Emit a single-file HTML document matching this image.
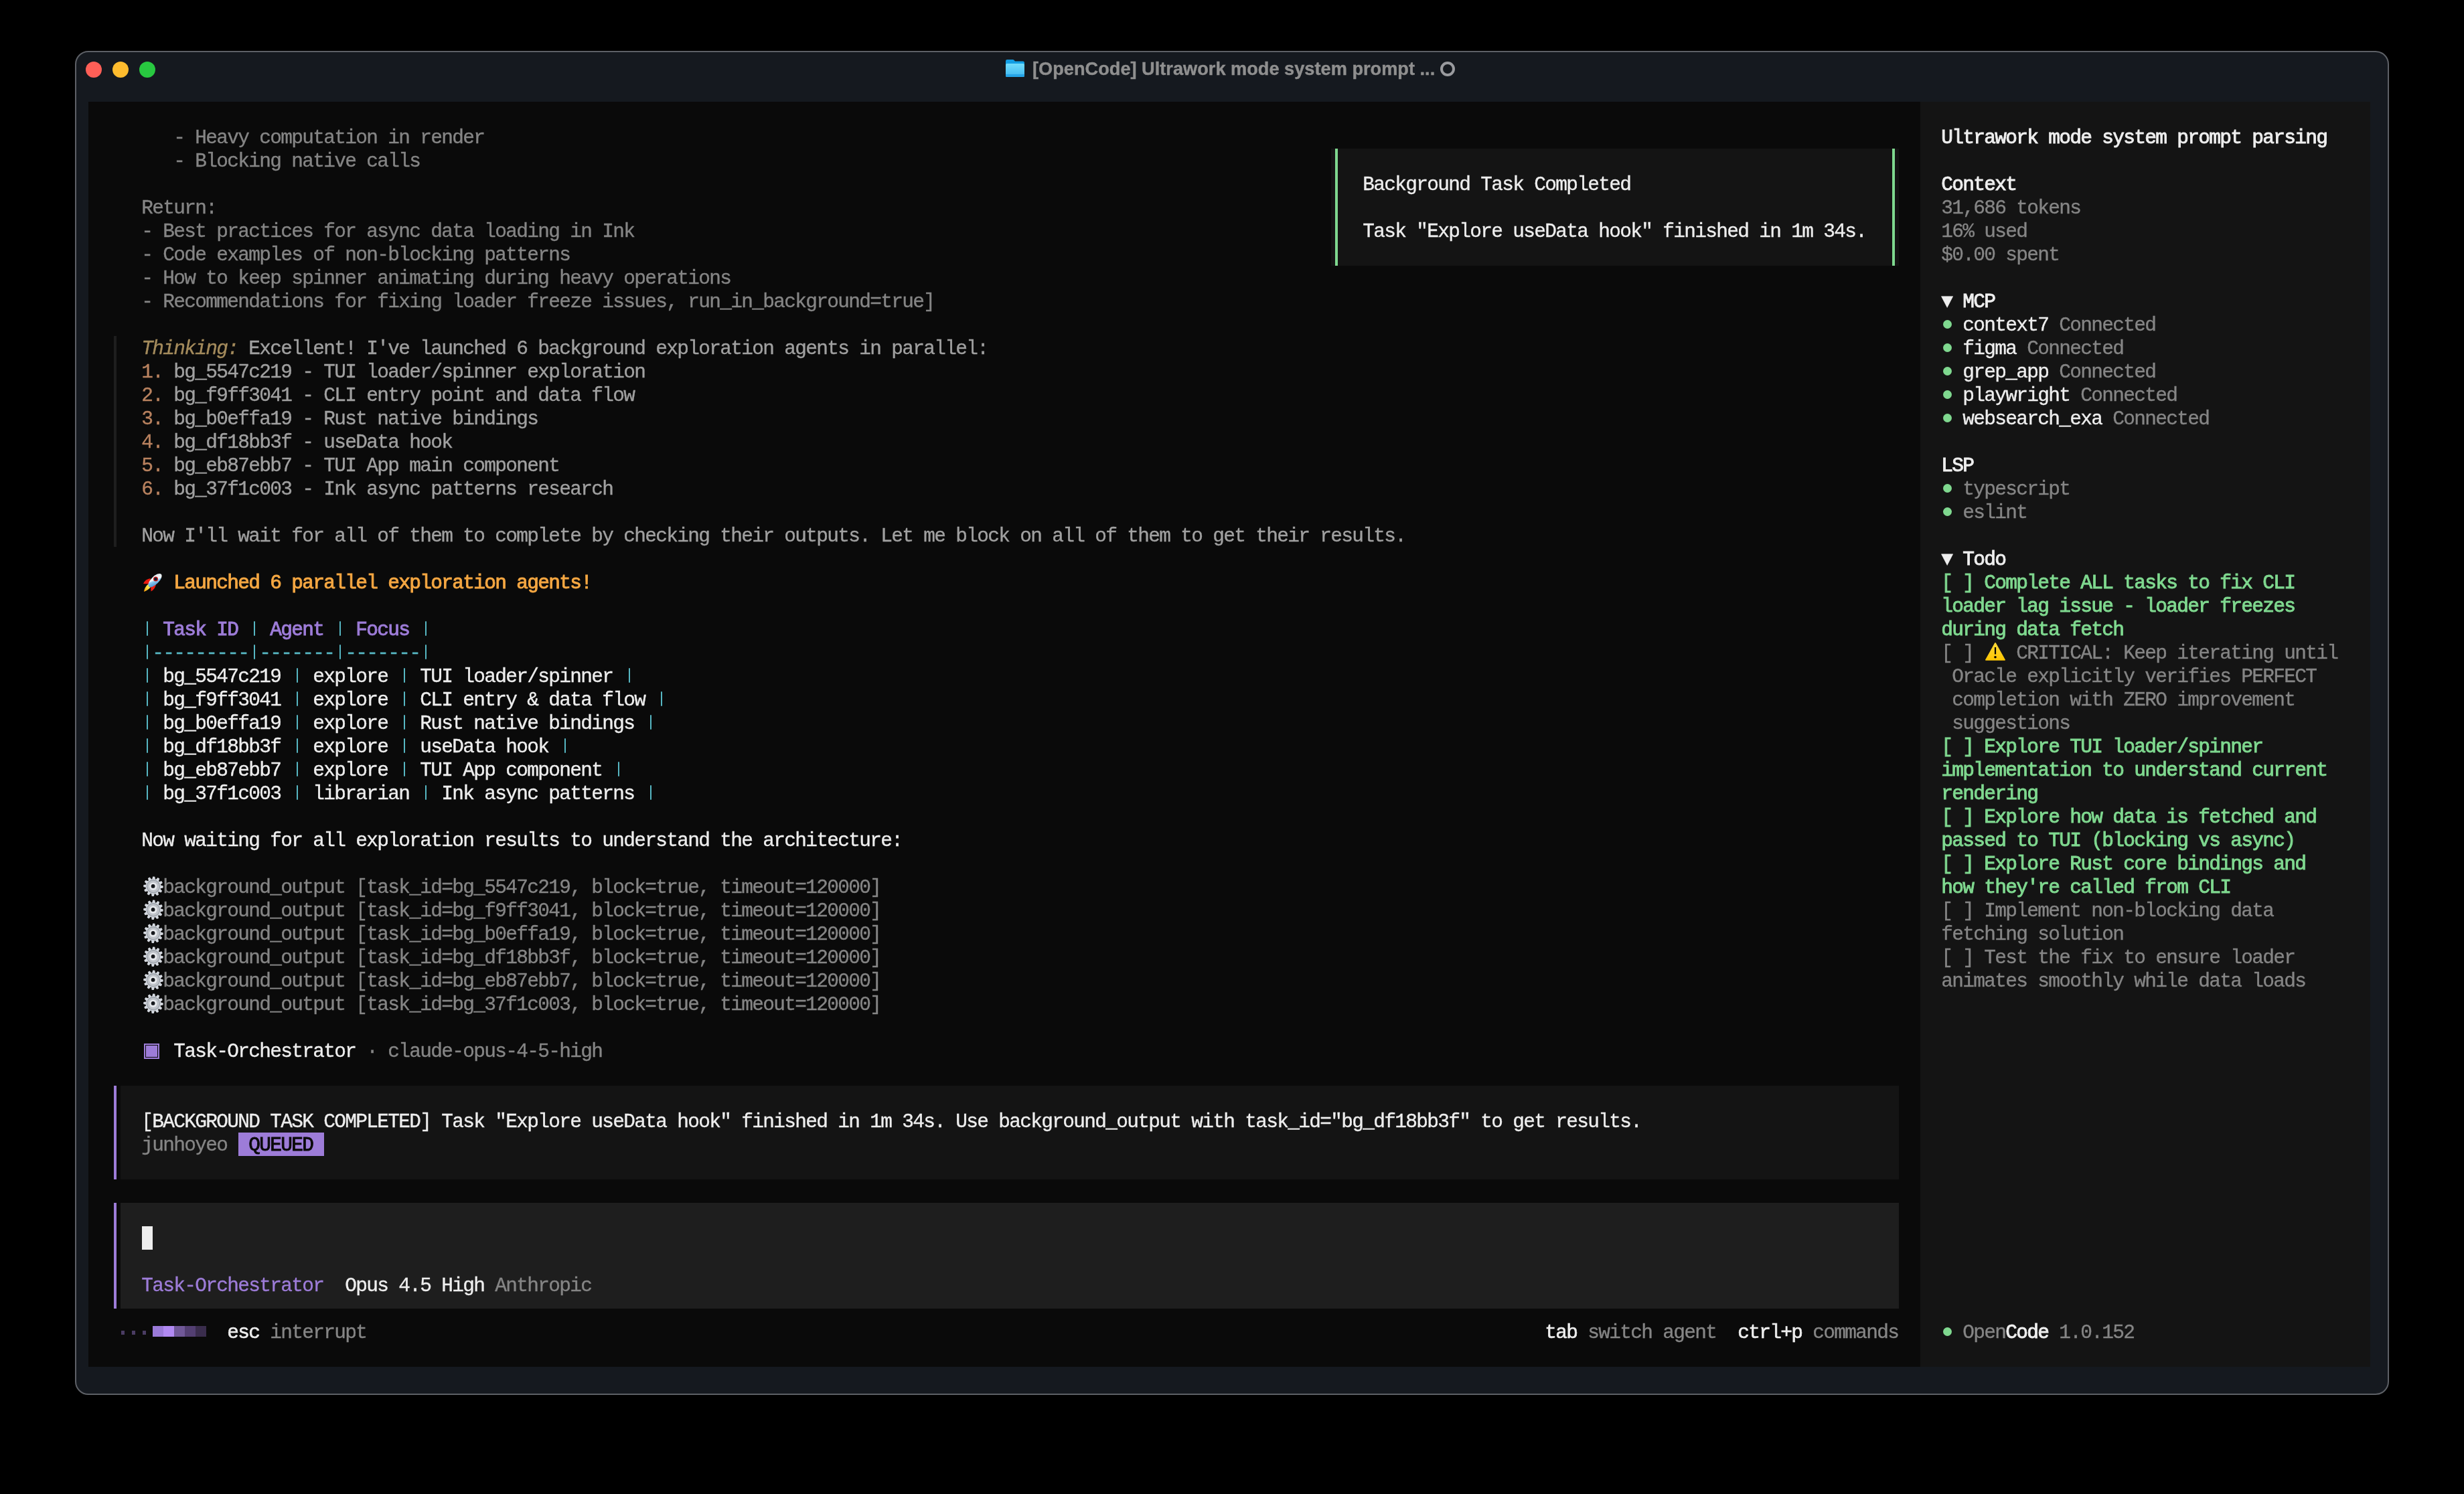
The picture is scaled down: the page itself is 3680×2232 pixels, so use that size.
<!DOCTYPE html>
<html><head><meta charset="utf-8"><title>OpenCode</title><style>
html,body{margin:0;padding:0;background:#000;width:3680px;height:2232px;overflow:hidden;position:relative}
.t{position:absolute;height:35px;line-height:35px;font-family:"Liberation Mono",monospace;font-size:29.5px;letter-spacing:-1.703px;white-space:pre;color:#eeeeee;-webkit-text-stroke-width:0.35px}
</style></head>
<body><div id="root" style="position:absolute;left:0;top:0;width:3680px;height:2232px;will-change:transform">
<div style="position:absolute;left:112px;top:76px;width:3456px;height:2008px;border-radius:20px;background:#15191f;box-sizing:border-box;border:2px solid #5d6066"></div>
<div style="position:absolute;left:132px;top:152px;width:3408px;height:1890px;background:#0a0a0a;"></div>
<div style="position:absolute;left:2868px;top:152px;width:672px;height:1890px;background:#141414;"></div>
<div style="position:absolute;left:128px;top:92px;width:24px;height:24px;border-radius:50%;background:#fe5f57"></div>
<div style="position:absolute;left:168px;top:92px;width:24px;height:24px;border-radius:50%;background:#febc2e"></div>
<div style="position:absolute;left:208px;top:92px;width:24px;height:24px;border-radius:50%;background:#28c840"></div>
<svg style="position:absolute;left:1502px;top:89px" width="28" height="26" viewBox="0 0 28 26">
<defs><linearGradient id="fg" x1="0" y1="0" x2="0" y2="1"><stop offset="0" stop-color="#72dcfc"/><stop offset="1" stop-color="#3db8f0"/></linearGradient></defs>
<path d="M0 2.2 Q0 0 2.2 0 L10.8 0 Q11.6 0 12.2 0.6 L14 2.6 L25.8 2.6 Q28 2.6 28 4.8 L28 23.8 Q28 26 25.8 26 L2.2 26 Q0 26 0 23.8 Z" fill="#129ee4"/>
<path d="M0 8 Q0 6 2 6 L26 6 Q28 6 28 8 L28 23.8 Q28 26 25.8 26 L2.2 26 Q0 26 0 23.8 Z" fill="url(#fg)"/>
<rect x="0" y="20.8" width="28" height="0.9" fill="#5cc8f4"/>
<path d="M0 21.7 L28 21.7 L28 23.8 Q28 26 25.8 26 L2.2 26 Q0 26 0 23.8 Z" fill="#26a4e6"/>
</svg>
<div style="position:absolute;left:1542px;top:83px;height:40px;line-height:40px;font-family:'Liberation Sans',sans-serif;font-weight:bold;font-size:27.2px;color:#8f8f8f;-webkit-text-stroke:0.4px #8f8f8f;white-space:pre" id="title">[OpenCode] Ultrawork mode system prompt ...</div>
<div style="position:absolute;left:2151px;top:91.5px;width:22px;height:22px;border-radius:50%;box-sizing:border-box;border:4px solid #9a9b9f"></div>
<div class="t" style="left:211.15px;top:189px"><span style="color:#858585">   - Heavy computation in render</span></div>
<div class="t" style="left:211.15px;top:224px"><span style="color:#858585">   - Blocking native calls</span></div>
<div class="t" style="left:211.15px;top:294px"><span style="color:#858585">Return:</span></div>
<div class="t" style="left:211.15px;top:329px"><span style="color:#858585">- Best practices for async data loading in Ink</span></div>
<div class="t" style="left:211.15px;top:364px"><span style="color:#858585">- Code examples of non-blocking patterns</span></div>
<div class="t" style="left:211.15px;top:399px"><span style="color:#858585">- How to keep spinner animating during heavy operations</span></div>
<div class="t" style="left:211.15px;top:434px"><span style="color:#858585">- Recommendations for fixing loader freeze issues, run_in_background=true]</span></div>
<div style="position:absolute;left:170px;top:502px;width:4px;height:315px;background:#1e1e1e;"></div>
<div class="t" style="left:211.15px;top:504px"><span style="color:#a48b5c;font-style:italic">Thinking:</span><span style="color:#a0a0a0"> Excellent! I've launched 6 background exploration agents in parallel:</span></div>
<div class="t" style="left:211.15px;top:539px"><span style="color:#b9825f">1.</span><span style="color:#a0a0a0"> bg_5547c219 - TUI loader/spinner exploration</span></div>
<div class="t" style="left:211.15px;top:574px"><span style="color:#b9825f">2.</span><span style="color:#a0a0a0"> bg_f9ff3041 - CLI entry point and data flow</span></div>
<div class="t" style="left:211.15px;top:609px"><span style="color:#b9825f">3.</span><span style="color:#a0a0a0"> bg_b0effa19 - Rust native bindings</span></div>
<div class="t" style="left:211.15px;top:644px"><span style="color:#b9825f">4.</span><span style="color:#a0a0a0"> bg_df18bb3f - useData hook</span></div>
<div class="t" style="left:211.15px;top:679px"><span style="color:#b9825f">5.</span><span style="color:#a0a0a0"> bg_eb87ebb7 - TUI App main component</span></div>
<div class="t" style="left:211.15px;top:714px"><span style="color:#b9825f">6.</span><span style="color:#a0a0a0"> bg_37f1c003 - Ink async patterns research</span></div>
<div class="t" style="left:211.15px;top:784px"><span style="color:#a0a0a0">Now I'll wait for all of them to complete by checking their outputs. Let me block on all of them to get their results.</span></div>
<svg style="position:absolute;left:213px;top:855px" width="30" height="30" viewBox="0 0 30 30"><defs><linearGradient id="fl" x1="0" y1="1" x2="1" y2="0"><stop offset="0" stop-color="#ff9a00"/><stop offset="0.6" stop-color="#ffe94a"/></linearGradient><linearGradient id="bd" x1="0" y1="1" x2="1" y2="0"><stop offset="0" stop-color="#2f7fc4"/><stop offset="0.45" stop-color="#8cc8f0"/><stop offset="0.55" stop-color="#f4f8fa"/><stop offset="1" stop-color="#d8e4ea"/></linearGradient></defs><path d="M2 29 Q3 22 8.5 17.5 L12.5 21.5 Q8 27 2 29 Z" fill="url(#fl)"/><path d="M1 17 Q4 10 12 9 L9.5 17.5 Z" fill="#ee1c10"/><path d="M12.5 28.5 Q19 25 20 17.5 L12 20.5 Z" fill="#ee1c10"/><ellipse cx="18.5" cy="12" rx="13" ry="5.8" transform="rotate(-45 18.5 12)" fill="url(#bd)"/><circle cx="19.5" cy="10" r="3.5" fill="#d81818"/><circle cx="19.5" cy="10" r="2.3" fill="#0c2030"/></svg>
<div class="t" style="left:259.15px;top:854px"><span style="color:#f5a742;-webkit-text-stroke-width:0.9px">Launched 6 parallel exploration agents!</span></div>
<div style="position:absolute;left:218.65px;top:928px;width:2.7px;height:22px;border-radius:1.3px;background:#56b6c2"></div>
<div style="position:absolute;left:378.65px;top:928px;width:2.7px;height:22px;border-radius:1.3px;background:#56b6c2"></div>
<div style="position:absolute;left:506.65px;top:928px;width:2.7px;height:22px;border-radius:1.3px;background:#56b6c2"></div>
<div style="position:absolute;left:634.65px;top:928px;width:2.7px;height:22px;border-radius:1.3px;background:#56b6c2"></div>
<div class="t" style="left:211.15px;top:924px">  <span style="color:#9d7cd8;-webkit-text-stroke-width:0.9px">Task ID</span>   <span style="color:#9d7cd8;-webkit-text-stroke-width:0.9px">Agent</span>   <span style="color:#9d7cd8;-webkit-text-stroke-width:0.9px">Focus</span></div>
<div style="position:absolute;left:218.65px;top:963px;width:2.7px;height:22px;border-radius:1.3px;background:#56b6c2"></div>
<div style="position:absolute;left:378.65px;top:963px;width:2.7px;height:22px;border-radius:1.3px;background:#56b6c2"></div>
<div style="position:absolute;left:506.65px;top:963px;width:2.7px;height:22px;border-radius:1.3px;background:#56b6c2"></div>
<div style="position:absolute;left:634.65px;top:963px;width:2.7px;height:22px;border-radius:1.3px;background:#56b6c2"></div>
<div class="t" style="left:211.15px;top:959px"><span style="color:#56b6c2"> --------- ------- ------- </span></div>
<div style="position:absolute;left:218.65px;top:998px;width:2.7px;height:22px;border-radius:1.3px;background:#56b6c2"></div>
<div style="position:absolute;left:442.65px;top:998px;width:2.7px;height:22px;border-radius:1.3px;background:#56b6c2"></div>
<div style="position:absolute;left:602.65px;top:998px;width:2.7px;height:22px;border-radius:1.3px;background:#56b6c2"></div>
<div style="position:absolute;left:938.65px;top:998px;width:2.7px;height:22px;border-radius:1.3px;background:#56b6c2"></div>
<div class="t" style="left:211.15px;top:994px"><span style="color:#eeeeee">  bg_5547c219   explore   TUI loader/spinner  </span></div>
<div style="position:absolute;left:218.65px;top:1033px;width:2.7px;height:22px;border-radius:1.3px;background:#56b6c2"></div>
<div style="position:absolute;left:442.65px;top:1033px;width:2.7px;height:22px;border-radius:1.3px;background:#56b6c2"></div>
<div style="position:absolute;left:602.65px;top:1033px;width:2.7px;height:22px;border-radius:1.3px;background:#56b6c2"></div>
<div style="position:absolute;left:986.65px;top:1033px;width:2.7px;height:22px;border-radius:1.3px;background:#56b6c2"></div>
<div class="t" style="left:211.15px;top:1029px"><span style="color:#eeeeee">  bg_f9ff3041   explore   CLI entry &amp; data flow  </span></div>
<div style="position:absolute;left:218.65px;top:1068px;width:2.7px;height:22px;border-radius:1.3px;background:#56b6c2"></div>
<div style="position:absolute;left:442.65px;top:1068px;width:2.7px;height:22px;border-radius:1.3px;background:#56b6c2"></div>
<div style="position:absolute;left:602.65px;top:1068px;width:2.7px;height:22px;border-radius:1.3px;background:#56b6c2"></div>
<div style="position:absolute;left:970.65px;top:1068px;width:2.7px;height:22px;border-radius:1.3px;background:#56b6c2"></div>
<div class="t" style="left:211.15px;top:1064px"><span style="color:#eeeeee">  bg_b0effa19   explore   Rust native bindings  </span></div>
<div style="position:absolute;left:218.65px;top:1103px;width:2.7px;height:22px;border-radius:1.3px;background:#56b6c2"></div>
<div style="position:absolute;left:442.65px;top:1103px;width:2.7px;height:22px;border-radius:1.3px;background:#56b6c2"></div>
<div style="position:absolute;left:602.65px;top:1103px;width:2.7px;height:22px;border-radius:1.3px;background:#56b6c2"></div>
<div style="position:absolute;left:842.65px;top:1103px;width:2.7px;height:22px;border-radius:1.3px;background:#56b6c2"></div>
<div class="t" style="left:211.15px;top:1099px"><span style="color:#eeeeee">  bg_df18bb3f   explore   useData hook  </span></div>
<div style="position:absolute;left:218.65px;top:1138px;width:2.7px;height:22px;border-radius:1.3px;background:#56b6c2"></div>
<div style="position:absolute;left:442.65px;top:1138px;width:2.7px;height:22px;border-radius:1.3px;background:#56b6c2"></div>
<div style="position:absolute;left:602.65px;top:1138px;width:2.7px;height:22px;border-radius:1.3px;background:#56b6c2"></div>
<div style="position:absolute;left:922.65px;top:1138px;width:2.7px;height:22px;border-radius:1.3px;background:#56b6c2"></div>
<div class="t" style="left:211.15px;top:1134px"><span style="color:#eeeeee">  bg_eb87ebb7   explore   TUI App component  </span></div>
<div style="position:absolute;left:218.65px;top:1173px;width:2.7px;height:22px;border-radius:1.3px;background:#56b6c2"></div>
<div style="position:absolute;left:442.65px;top:1173px;width:2.7px;height:22px;border-radius:1.3px;background:#56b6c2"></div>
<div style="position:absolute;left:634.65px;top:1173px;width:2.7px;height:22px;border-radius:1.3px;background:#56b6c2"></div>
<div style="position:absolute;left:970.65px;top:1173px;width:2.7px;height:22px;border-radius:1.3px;background:#56b6c2"></div>
<div class="t" style="left:211.15px;top:1169px"><span style="color:#eeeeee">  bg_37f1c003   librarian   Ink async patterns  </span></div>
<div class="t" style="left:211.15px;top:1239px"><span style="color:#eeeeee">Now waiting for all exploration results to understand the architecture:</span></div>
<svg style="position:absolute;left:213.6px;top:1309px" width="30" height="31" viewBox="0 0 30 31"><polygon points="13.23,4.14 14.23,0.52 17.32,0.68 17.92,4.39 19.05,4.75 21.72,2.11 24.31,3.80 22.99,7.31 23.78,8.19 27.41,7.24 28.82,10.00 25.91,12.38 26.16,13.53 29.78,14.53 29.62,17.62 25.91,18.22 25.55,19.35 28.19,22.02 26.50,24.61 22.99,23.29 22.11,24.08 23.06,27.71 20.30,29.12 17.92,26.21 16.77,26.46 15.77,30.08 12.68,29.92 12.08,26.21 10.95,25.85 8.28,28.49 5.69,26.80 7.01,23.29 6.22,22.41 2.59,23.36 1.18,20.60 4.09,18.22 3.84,17.07 0.22,16.07 0.38,12.98 4.09,12.38 4.45,11.25 1.81,8.58 3.50,5.99 7.01,7.31 7.89,6.52 6.94,2.89 9.70,1.48 12.08,4.39" fill="#d5d9e0"/><circle cx="15" cy="15.3" r="10.2" fill="#9aa0a8"/><circle cx="15" cy="15.3" r="8.9" fill="#bfc3c9"/><circle cx="14.8" cy="15.100000000000001" r="5.7" fill="#e8eaee"/><circle cx="14.6" cy="14.9" r="2.9" fill="#15181c"/></svg>
<div class="t" style="left:243.15px;top:1309px"><span style="color:#858585">background_output [task_id=bg_5547c219, block=true, timeout=120000]</span></div>
<svg style="position:absolute;left:213.6px;top:1344px" width="30" height="31" viewBox="0 0 30 31"><polygon points="13.23,4.14 14.23,0.52 17.32,0.68 17.92,4.39 19.05,4.75 21.72,2.11 24.31,3.80 22.99,7.31 23.78,8.19 27.41,7.24 28.82,10.00 25.91,12.38 26.16,13.53 29.78,14.53 29.62,17.62 25.91,18.22 25.55,19.35 28.19,22.02 26.50,24.61 22.99,23.29 22.11,24.08 23.06,27.71 20.30,29.12 17.92,26.21 16.77,26.46 15.77,30.08 12.68,29.92 12.08,26.21 10.95,25.85 8.28,28.49 5.69,26.80 7.01,23.29 6.22,22.41 2.59,23.36 1.18,20.60 4.09,18.22 3.84,17.07 0.22,16.07 0.38,12.98 4.09,12.38 4.45,11.25 1.81,8.58 3.50,5.99 7.01,7.31 7.89,6.52 6.94,2.89 9.70,1.48 12.08,4.39" fill="#d5d9e0"/><circle cx="15" cy="15.3" r="10.2" fill="#9aa0a8"/><circle cx="15" cy="15.3" r="8.9" fill="#bfc3c9"/><circle cx="14.8" cy="15.100000000000001" r="5.7" fill="#e8eaee"/><circle cx="14.6" cy="14.9" r="2.9" fill="#15181c"/></svg>
<div class="t" style="left:243.15px;top:1344px"><span style="color:#858585">background_output [task_id=bg_f9ff3041, block=true, timeout=120000]</span></div>
<svg style="position:absolute;left:213.6px;top:1379px" width="30" height="31" viewBox="0 0 30 31"><polygon points="13.23,4.14 14.23,0.52 17.32,0.68 17.92,4.39 19.05,4.75 21.72,2.11 24.31,3.80 22.99,7.31 23.78,8.19 27.41,7.24 28.82,10.00 25.91,12.38 26.16,13.53 29.78,14.53 29.62,17.62 25.91,18.22 25.55,19.35 28.19,22.02 26.50,24.61 22.99,23.29 22.11,24.08 23.06,27.71 20.30,29.12 17.92,26.21 16.77,26.46 15.77,30.08 12.68,29.92 12.08,26.21 10.95,25.85 8.28,28.49 5.69,26.80 7.01,23.29 6.22,22.41 2.59,23.36 1.18,20.60 4.09,18.22 3.84,17.07 0.22,16.07 0.38,12.98 4.09,12.38 4.45,11.25 1.81,8.58 3.50,5.99 7.01,7.31 7.89,6.52 6.94,2.89 9.70,1.48 12.08,4.39" fill="#d5d9e0"/><circle cx="15" cy="15.3" r="10.2" fill="#9aa0a8"/><circle cx="15" cy="15.3" r="8.9" fill="#bfc3c9"/><circle cx="14.8" cy="15.100000000000001" r="5.7" fill="#e8eaee"/><circle cx="14.6" cy="14.9" r="2.9" fill="#15181c"/></svg>
<div class="t" style="left:243.15px;top:1379px"><span style="color:#858585">background_output [task_id=bg_b0effa19, block=true, timeout=120000]</span></div>
<svg style="position:absolute;left:213.6px;top:1414px" width="30" height="31" viewBox="0 0 30 31"><polygon points="13.23,4.14 14.23,0.52 17.32,0.68 17.92,4.39 19.05,4.75 21.72,2.11 24.31,3.80 22.99,7.31 23.78,8.19 27.41,7.24 28.82,10.00 25.91,12.38 26.16,13.53 29.78,14.53 29.62,17.62 25.91,18.22 25.55,19.35 28.19,22.02 26.50,24.61 22.99,23.29 22.11,24.08 23.06,27.71 20.30,29.12 17.92,26.21 16.77,26.46 15.77,30.08 12.68,29.92 12.08,26.21 10.95,25.85 8.28,28.49 5.69,26.80 7.01,23.29 6.22,22.41 2.59,23.36 1.18,20.60 4.09,18.22 3.84,17.07 0.22,16.07 0.38,12.98 4.09,12.38 4.45,11.25 1.81,8.58 3.50,5.99 7.01,7.31 7.89,6.52 6.94,2.89 9.70,1.48 12.08,4.39" fill="#d5d9e0"/><circle cx="15" cy="15.3" r="10.2" fill="#9aa0a8"/><circle cx="15" cy="15.3" r="8.9" fill="#bfc3c9"/><circle cx="14.8" cy="15.100000000000001" r="5.7" fill="#e8eaee"/><circle cx="14.6" cy="14.9" r="2.9" fill="#15181c"/></svg>
<div class="t" style="left:243.15px;top:1414px"><span style="color:#858585">background_output [task_id=bg_df18bb3f, block=true, timeout=120000]</span></div>
<svg style="position:absolute;left:213.6px;top:1449px" width="30" height="31" viewBox="0 0 30 31"><polygon points="13.23,4.14 14.23,0.52 17.32,0.68 17.92,4.39 19.05,4.75 21.72,2.11 24.31,3.80 22.99,7.31 23.78,8.19 27.41,7.24 28.82,10.00 25.91,12.38 26.16,13.53 29.78,14.53 29.62,17.62 25.91,18.22 25.55,19.35 28.19,22.02 26.50,24.61 22.99,23.29 22.11,24.08 23.06,27.71 20.30,29.12 17.92,26.21 16.77,26.46 15.77,30.08 12.68,29.92 12.08,26.21 10.95,25.85 8.28,28.49 5.69,26.80 7.01,23.29 6.22,22.41 2.59,23.36 1.18,20.60 4.09,18.22 3.84,17.07 0.22,16.07 0.38,12.98 4.09,12.38 4.45,11.25 1.81,8.58 3.50,5.99 7.01,7.31 7.89,6.52 6.94,2.89 9.70,1.48 12.08,4.39" fill="#d5d9e0"/><circle cx="15" cy="15.3" r="10.2" fill="#9aa0a8"/><circle cx="15" cy="15.3" r="8.9" fill="#bfc3c9"/><circle cx="14.8" cy="15.100000000000001" r="5.7" fill="#e8eaee"/><circle cx="14.6" cy="14.9" r="2.9" fill="#15181c"/></svg>
<div class="t" style="left:243.15px;top:1449px"><span style="color:#858585">background_output [task_id=bg_eb87ebb7, block=true, timeout=120000]</span></div>
<svg style="position:absolute;left:213.6px;top:1484px" width="30" height="31" viewBox="0 0 30 31"><polygon points="13.23,4.14 14.23,0.52 17.32,0.68 17.92,4.39 19.05,4.75 21.72,2.11 24.31,3.80 22.99,7.31 23.78,8.19 27.41,7.24 28.82,10.00 25.91,12.38 26.16,13.53 29.78,14.53 29.62,17.62 25.91,18.22 25.55,19.35 28.19,22.02 26.50,24.61 22.99,23.29 22.11,24.08 23.06,27.71 20.30,29.12 17.92,26.21 16.77,26.46 15.77,30.08 12.68,29.92 12.08,26.21 10.95,25.85 8.28,28.49 5.69,26.80 7.01,23.29 6.22,22.41 2.59,23.36 1.18,20.60 4.09,18.22 3.84,17.07 0.22,16.07 0.38,12.98 4.09,12.38 4.45,11.25 1.81,8.58 3.50,5.99 7.01,7.31 7.89,6.52 6.94,2.89 9.70,1.48 12.08,4.39" fill="#d5d9e0"/><circle cx="15" cy="15.3" r="10.2" fill="#9aa0a8"/><circle cx="15" cy="15.3" r="8.9" fill="#bfc3c9"/><circle cx="14.8" cy="15.100000000000001" r="5.7" fill="#e8eaee"/><circle cx="14.6" cy="14.9" r="2.9" fill="#15181c"/></svg>
<div class="t" style="left:243.15px;top:1484px"><span style="color:#858585">background_output [task_id=bg_37f1c003, block=true, timeout=120000]</span></div>
<div style="position:absolute;left:215px;top:1559px;width:23px;height:23px;box-sizing:border-box;border:2.2px solid #9d7cd8;"><div style="position:absolute;left:1px;top:1px;right:1px;bottom:1px;background:#9d7cd8"></div></div>
<div class="t" style="left:259.15px;top:1554px"><span style="color:#eeeeee">Task-Orchestrator</span><span style="color:#858585"> · </span><span style="color:#858585">claude-opus-4-5-high</span></div>
<div style="position:absolute;left:170px;top:1622px;width:4px;height:140px;background:#9d7cd8;"></div>
<div style="position:absolute;left:180px;top:1622px;width:2656px;height:140px;background:#141414;"></div>
<div class="t" style="left:211.15px;top:1659px"><span style="color:#eeeeee">[BACKGROUND TASK COMPLETED] Task "Explore useData hook" finished in 1m 34s. Use background_output with task_id="bg_df18bb3f" to get results.</span></div>
<div style="position:absolute;left:356px;top:1692px;width:128px;height:35px;background:#9d7cd8;"></div>
<div class="t" style="left:211.15px;top:1694px"><span style="color:#858585">junhoyeo</span> <span style="color:#0a0a0a;-webkit-text-stroke-width:0.9px"> QUEUED </span></div>
<div style="position:absolute;left:170px;top:1797px;width:4px;height:158px;background:#9d7cd8;"></div>
<div style="position:absolute;left:180px;top:1797px;width:2656px;height:158px;background:#1e1e1e;"></div>
<div style="position:absolute;left:212px;top:1832px;width:16px;height:35px;background:#eeeeee;"></div>
<div class="t" style="left:211.15px;top:1904px"><span style="color:#9d7cd8">Task-Orchestrator</span>  <span style="color:#eeeeee">Opus 4.5 High</span> <span style="color:#858585">Anthropic</span></div>
<div style="position:absolute;left:181px;top:1988px;width:5px;height:6px;background:#4a3c63;"></div>
<div style="position:absolute;left:197px;top:1988px;width:5px;height:6px;background:#4a3c63;"></div>
<div style="position:absolute;left:213px;top:1988px;width:5px;height:6px;background:#4a3c63;"></div>
<div style="position:absolute;left:228px;top:1981px;width:16px;height:16px;background:#9a7ad8;"></div>
<div style="position:absolute;left:244px;top:1981px;width:16px;height:16px;background:#b189f2;"></div>
<div style="position:absolute;left:260px;top:1981px;width:16px;height:16px;background:#705898;"></div>
<div style="position:absolute;left:276px;top:1981px;width:16px;height:16px;background:#533f72;"></div>
<div style="position:absolute;left:292px;top:1981px;width:16px;height:16px;background:#3a2d4d;"></div>
<div class="t" style="left:339.15px;top:1974px"><span style="color:#eeeeee;-webkit-text-stroke-width:0.6px">esc</span><span style="color:#858585"> interrupt</span></div>
<div class="t" style="left:2307.15px;top:1974px"><span style="color:#eeeeee;-webkit-text-stroke-width:0.6px">tab</span><span style="color:#858585"> switch agent</span>  <span style="color:#eeeeee;-webkit-text-stroke-width:0.6px">ctrl+p</span><span style="color:#858585"> commands</span></div>
<div style="position:absolute;left:1988px;top:222px;width:848px;height:175px;background:#141414;"></div>
<div style="position:absolute;left:1994px;top:222px;width:4px;height:175px;background:#7fd88f;"></div>
<div style="position:absolute;left:2826px;top:222px;width:4px;height:175px;background:#7fd88f;"></div>
<div class="t" style="left:2035.15px;top:259px"><span style="color:#eeeeee">Background Task Completed</span></div>
<div class="t" style="left:2035.15px;top:329px"><span style="color:#eeeeee">Task "Explore useData hook" finished in 1m 34s.</span></div>
<div class="t" style="left:2899.15px;top:189px"><span style="color:#eeeeee;-webkit-text-stroke-width:0.9px">Ultrawork mode system prompt parsing</span></div>
<div class="t" style="left:2899.15px;top:259px"><span style="color:#eeeeee;-webkit-text-stroke-width:0.9px">Context</span></div>
<div class="t" style="left:2899.15px;top:294px"><span style="color:#858585">31,686 tokens</span></div>
<div class="t" style="left:2899.15px;top:329px"><span style="color:#858585">16% used</span></div>
<div class="t" style="left:2899.15px;top:364px"><span style="color:#858585">$0.00 spent</span></div>
<div class="t" style="left:2899.15px;top:434px"><span style="color:#eeeeee">▼</span> <span style="color:#eeeeee;-webkit-text-stroke-width:0.9px">MCP</span></div>
<div style="position:absolute;left:2901.5px;top:478.0px;width:13px;height:13px;border-radius:50%;background:#7fd88f"></div>
<div class="t" style="left:2899.15px;top:469px">  <span style="color:#eeeeee">context7</span><span style="color:#858585"> Connected</span></div>
<div style="position:absolute;left:2901.5px;top:513.0px;width:13px;height:13px;border-radius:50%;background:#7fd88f"></div>
<div class="t" style="left:2899.15px;top:504px">  <span style="color:#eeeeee">figma</span><span style="color:#858585"> Connected</span></div>
<div style="position:absolute;left:2901.5px;top:548.0px;width:13px;height:13px;border-radius:50%;background:#7fd88f"></div>
<div class="t" style="left:2899.15px;top:539px">  <span style="color:#eeeeee">grep_app</span><span style="color:#858585"> Connected</span></div>
<div style="position:absolute;left:2901.5px;top:583.0px;width:13px;height:13px;border-radius:50%;background:#7fd88f"></div>
<div class="t" style="left:2899.15px;top:574px">  <span style="color:#eeeeee">playwright</span><span style="color:#858585"> Connected</span></div>
<div style="position:absolute;left:2901.5px;top:618.0px;width:13px;height:13px;border-radius:50%;background:#7fd88f"></div>
<div class="t" style="left:2899.15px;top:609px">  <span style="color:#eeeeee">websearch_exa</span><span style="color:#858585"> Connected</span></div>
<div class="t" style="left:2899.15px;top:679px"><span style="color:#eeeeee;-webkit-text-stroke-width:0.9px">LSP</span></div>
<div style="position:absolute;left:2901.5px;top:723.0px;width:13px;height:13px;border-radius:50%;background:#7fd88f"></div>
<div class="t" style="left:2899.15px;top:714px"><span style="color:#858585">  typescript</span></div>
<div style="position:absolute;left:2901.5px;top:758.0px;width:13px;height:13px;border-radius:50%;background:#7fd88f"></div>
<div class="t" style="left:2899.15px;top:749px"><span style="color:#858585">  eslint</span></div>
<div class="t" style="left:2899.15px;top:819px"><span style="color:#eeeeee">▼</span> <span style="color:#eeeeee;-webkit-text-stroke-width:0.9px">Todo</span></div>
<div class="t" style="left:2899.15px;top:854px"><span style="color:#7fd88f;-webkit-text-stroke-width:0.9px">[ ] Complete ALL tasks to fix CLI</span></div>
<div class="t" style="left:2899.15px;top:889px"><span style="color:#7fd88f;-webkit-text-stroke-width:0.9px">loader lag issue - loader freezes</span></div>
<div class="t" style="left:2899.15px;top:924px"><span style="color:#7fd88f;-webkit-text-stroke-width:0.9px">during data fetch</span></div>
<div class="t" style="left:2899.15px;top:959px"><span style="color:#858585">[ ]</span><span style="color:#858585">    CRITICAL: Keep iterating until</span></div>
<svg style="position:absolute;left:2962px;top:957px" width="36" height="32" viewBox="0 0 36 32"><defs><linearGradient id="wg" x1="0" y1="0" x2="0" y2="1"><stop offset="0" stop-color="#ffd93a"/><stop offset="1" stop-color="#fdc500"/></linearGradient></defs><path d="M18 3 Q18.6 3 19 3.7 L32.8 28.6 Q33.2 29.8 32 29.8 L4 29.8 Q2.8 29.8 3.2 28.6 L17 3.7 Q17.4 3 18 3 Z" fill="url(#wg)"/><rect x="16.9" y="10" width="2.2" height="10.4" fill="#000"/><circle cx="18" cy="24.8" r="1.8" fill="#000"/></svg>
<div class="t" style="left:2899.15px;top:994px"><span style="color:#858585"> Oracle explicitly verifies PERFECT</span></div>
<div class="t" style="left:2899.15px;top:1029px"><span style="color:#858585"> completion with ZERO improvement</span></div>
<div class="t" style="left:2899.15px;top:1064px"><span style="color:#858585"> suggestions</span></div>
<div class="t" style="left:2899.15px;top:1099px"><span style="color:#7fd88f;-webkit-text-stroke-width:0.9px">[ ] Explore TUI loader/spinner</span></div>
<div class="t" style="left:2899.15px;top:1134px"><span style="color:#7fd88f;-webkit-text-stroke-width:0.9px">implementation to understand current</span></div>
<div class="t" style="left:2899.15px;top:1169px"><span style="color:#7fd88f;-webkit-text-stroke-width:0.9px">rendering</span></div>
<div class="t" style="left:2899.15px;top:1204px"><span style="color:#7fd88f;-webkit-text-stroke-width:0.9px">[ ] Explore how data is fetched and</span></div>
<div class="t" style="left:2899.15px;top:1239px"><span style="color:#7fd88f;-webkit-text-stroke-width:0.9px">passed to TUI (blocking vs async)</span></div>
<div class="t" style="left:2899.15px;top:1274px"><span style="color:#7fd88f;-webkit-text-stroke-width:0.9px">[ ] Explore Rust core bindings and</span></div>
<div class="t" style="left:2899.15px;top:1309px"><span style="color:#7fd88f;-webkit-text-stroke-width:0.9px">how they're called from CLI</span></div>
<div class="t" style="left:2899.15px;top:1344px"><span style="color:#858585">[ ] Implement non-blocking data</span></div>
<div class="t" style="left:2899.15px;top:1379px"><span style="color:#858585">fetching solution</span></div>
<div class="t" style="left:2899.15px;top:1414px"><span style="color:#858585">[ ] Test the fix to ensure loader</span></div>
<div class="t" style="left:2899.15px;top:1449px"><span style="color:#858585">animates smoothly while data loads</span></div>
<div style="position:absolute;left:2901.5px;top:1983.0px;width:13px;height:13px;border-radius:50%;background:#7fd88f"></div>
<div class="t" style="left:2899.15px;top:1974px">  <span style="color:#858585">Open</span><span style="color:#eeeeee;-webkit-text-stroke-width:0.9px">Code</span><span style="color:#858585"> 1.0.152</span></div>
</div></body></html>
